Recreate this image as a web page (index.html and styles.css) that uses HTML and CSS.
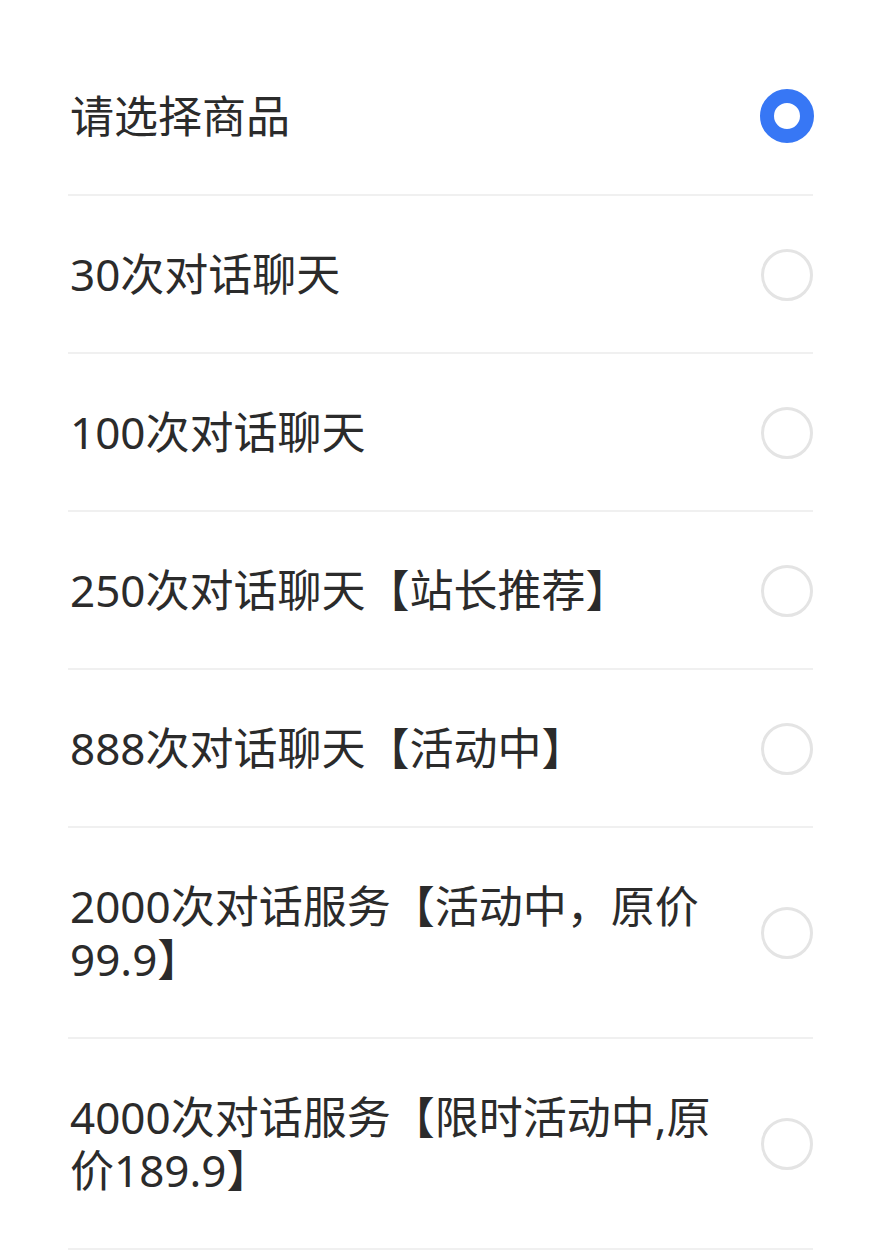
FILE: index.html
```html
<!DOCTYPE html>
<html lang="zh-CN">
<head>
    <meta charset="UTF-8">
    <meta name="viewport" content="width=device-width, initial-scale=1.0">
    <title>请选择商品</title>
    <link rel="stylesheet" href="styles.css">
</head>
<body>
    <div class="picker">
        <label class="option">
            <span class="option-text">请选择商品</span>
            <span class="radio checked"></span>
        </label>
        <label class="option">
            <span class="option-text">30次对话聊天</span>
            <span class="radio"></span>
        </label>
        <label class="option">
            <span class="option-text">100次对话聊天</span>
            <span class="radio"></span>
        </label>
        <label class="option">
            <span class="option-text">250次对话聊天【站长推荐】</span>
            <span class="radio"></span>
        </label>
        <label class="option">
            <span class="option-text">888次对话聊天【活动中】</span>
            <span class="radio"></span>
        </label>
        <label class="option">
            <span class="option-text">2000次对话服务【活动中，原价99.9】</span>
            <span class="radio"></span>
        </label>
        <label class="option">
            <span class="option-text">4000次对话服务【限时活动中,原价189.9】</span>
            <span class="radio"></span>
        </label>
    </div>
</body>
</html>
```

FILE: styles.css
```css
body {
    margin: 0;
    background: #fff;
    font-family: "Noto Sans", "Noto Sans CJK SC", sans-serif;
    color: #2b2b2b;
}
.picker {
    padding: 37px 64px 0 68px;
}
.option {
    display: flex;
    align-items: center;
    justify-content: space-between;
    gap: 20px;
    padding: 52px 0 51px;
    border-bottom: 2px solid #f0f0f0;
    cursor: pointer;
}
.option-text {
    flex: 1;
    font-size: 44px;
    line-height: 53px;
    padding-left: 2px;
}
.radio {
    flex: none;
    width: 52px;
    height: 52px;
    box-sizing: border-box;
    border-radius: 50%;
    border: 3px solid #e4e4e4;
}
.radio.checked {
    width: 54px;
    height: 54px;
    margin-right: -1px;
    border: 14px solid #3777f5;
}
```
